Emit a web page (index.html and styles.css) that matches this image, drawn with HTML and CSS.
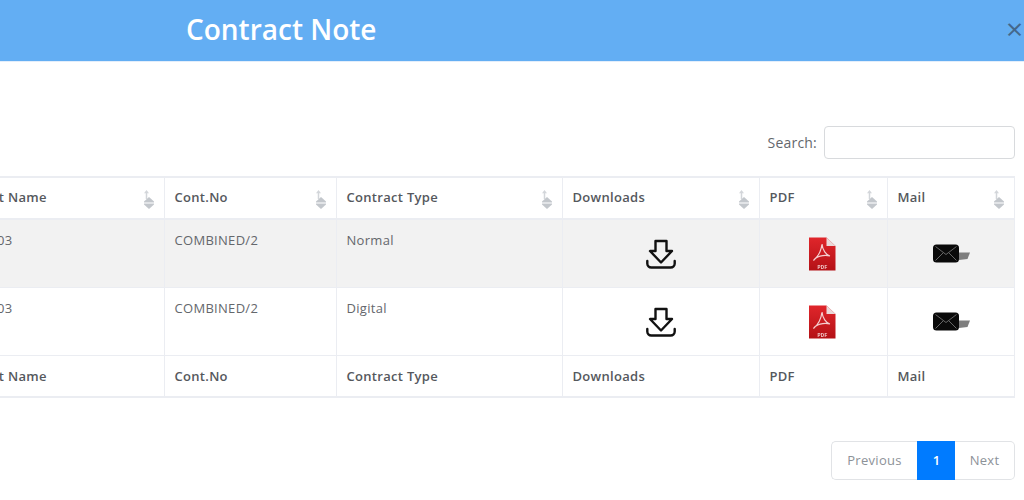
FILE: index.html
```html
<!DOCTYPE html>
<html lang="en">
<head>
<meta charset="utf-8">
<title>Contract Note</title>
<link rel="stylesheet" href="styles.css">
</head>
<body>
<svg class="defs" width="0" height="0" aria-hidden="true">
  <defs>
    <linearGradient id="pdfred" x1="0" y1="0" x2="0" y2="1">
      <stop offset="0" stop-color="#e0262b"/>
      <stop offset="1" stop-color="#b41116"/>
    </linearGradient>
    <symbol id="dl" viewBox="0 0 30 30">
      <path d="M9.500 2h11v10h5.500L15 23.500 4 12h5.500z" fill="none" stroke="#111" stroke-width="2.400" stroke-linejoin="round"/>
      <path d="M1.300 22v2.500a4 4 0 0 0 4 4h19.400a4 4 0 0 0 4-4V22" fill="none" stroke="#111" stroke-width="2.400" stroke-linecap="round"/>
    </symbol>
    <symbol id="pdf" viewBox="0 0 28 34">
      <path d="M1 0.500h17.500l9 8.500v24.500H1z" fill="url(#pdfred)"/>
      <path d="M18.500 0.500l9 8.500h-9z" fill="#ead9d9"/>
      <path d="M14 7c-.6 5-3.200 12-8.500 16.500 2-3.500 10-6.500 16.500-4.500-4-1-7.500-6-8-12z" fill="none" stroke="#f5cfd0" stroke-width="1.200"/>
      <text class="pdf-label" x="14.500" y="31.500" text-anchor="middle">PDF</text>
    </symbol>
    <symbol id="mail" viewBox="0 0 37 19">
      <rect x="0" y="0.500" width="26" height="18" rx="3.500" fill="#0a0a0a"/>
      <path d="M2.500 2.500l10.500 8 10.500-8M2.500 16.500l7.500-7.500M23.500 16.500l-7.500-7.500" fill="none" stroke="#666" stroke-width="1"/>
      <path d="M26 8.500h11l-2.500 6.500-8.500 1z" fill="#7e7e7e"/>
    </symbol>
  </defs>
</svg>
<header class="modal-head">
  <h1 class="modal-title">Contract Note</h1>
  <button class="close" type="button" aria-label="Close">×</button>
</header>
<main class="modal-body">
  <div class="search">
    <label class="search-label" for="q">Search:</label>
    <input class="search-input" id="q" type="search">
  </div>
  <table class="grid">
    <thead>
      <tr>
        <th class="c1 sort">Contract Name</th>
        <th class="c2 sort">Cont.No</th>
        <th class="c3 sort">Contract Type</th>
        <th class="c4 sort">Downloads</th>
        <th class="c5 sort">PDF</th>
        <th class="c6 sort">Mail</th>
      </tr>
    </thead>
    <tbody>
      <tr class="odd">
        <td>CON/2003</td>
        <td>COMBINED/2</td>
        <td>Normal</td>
        <td class="ic"><svg class="i-dl"><use href="#dl"/></svg></td>
        <td class="ic"><svg class="i-pdf"><use href="#pdf"/></svg></td>
        <td class="ic"><svg class="i-mail"><use href="#mail"/></svg></td>
      </tr>
      <tr>
        <td>CON/2003</td>
        <td>COMBINED/2</td>
        <td>Digital</td>
        <td class="ic"><svg class="i-dl"><use href="#dl"/></svg></td>
        <td class="ic"><svg class="i-pdf"><use href="#pdf"/></svg></td>
        <td class="ic"><svg class="i-mail"><use href="#mail"/></svg></td>
      </tr>
    </tbody>
    <tfoot>
      <tr>
        <th>Contract Name</th>
        <th>Cont.No</th>
        <th>Contract Type</th>
        <th>Downloads</th>
        <th>PDF</th>
        <th>Mail</th>
      </tr>
    </tfoot>
  </table>
  <nav class="pager">
    <a class="page first">Previous</a>
    <a class="page active">1</a>
    <a class="page last">Next</a>
  </nav>
</main>
</body>
</html>
```
FILE: styles.css
```css
* { box-sizing: border-box; }
html, body { margin: 0; height: 500px; overflow: hidden; background: #fff; }
body { font-family: "Open Sans", sans-serif; font-size: 13px; letter-spacing: 0.3px; color: #64676c; width: 1024px; }
.defs { position: absolute; }

.modal-head {
  height: 62px;
  background: #63aef3;
  display: flex;
  align-items: center;
  justify-content: space-between;
  padding: 0 0 4px 186px;
  border-bottom: 1px solid #e3eefb;
}
.modal-title { margin: 0; color: #fff; font-size: 28px; font-weight: 600; line-height: 1; letter-spacing: 0; }
.close {
  border: 0; background: none; padding: 0; width: 24px;
  color: #44678a; font: 400 30px/1 "Open Sans", sans-serif;
  text-align: left; margin: 0 -6px 0 0;
}

.modal-body { padding: 64px 9px 0 0; display: flex; flex-direction: column; align-items: flex-end; }
.search { display: flex; align-items: center; gap: 7px; height: 33px; margin-bottom: 17px; }
.search-label { font-size: 14px; letter-spacing: 0.2px; }
.search-input {
  width: 191px; height: 33px;
  border: 1px solid #d8dadd; border-radius: 4px; background: #fff;
}

.grid {
  width: 1077px;
  flex: none;
  table-layout: fixed;
  border-collapse: separate;
  border-spacing: 0;
  border-top: 2px solid #ebedf2;
  border-bottom: 2px solid #ebedf2;
  border-right: 1px solid #ebedf2;
}
.c1 { width: 227px; }
.c2 { width: 172px; }
.c3 { width: 226px; }
.c4 { width: 197px; }
.c5 { width: 128px; }
.c6 { width: 127px; }

th, td { text-align: left; vertical-align: top; border-left: 1px solid #ebedf2; }
th { height: 40px; padding: 0 10px 1px 9.500px; vertical-align: middle; font-weight: 600; color: #55585d; font-size: 13px; }
thead th { height: 42px; padding-bottom: 2px; border-bottom: 2px solid #ebedf2; position: relative; }
td { height: 68px; padding: 11px 10px 11px 9.500px; border-bottom: 1px solid #ebedf2; font-weight: 400; }
.odd td { background: #f2f2f2; }
.ic { text-align: center; vertical-align: middle; padding: 0; }
.ic svg { display: block; margin: 0 auto; filter: blur(0.35px); }
.i-dl { width: 30px; height: 30px; }
.i-pdf { width: 28px; height: 34px; transform: translateX(-2px); }
.i-mail { width: 37px; height: 19px; }
.pdf-label { font: 700 4.500px "Liberation Sans", sans-serif; fill: #f6d9d9; }

.sort::before, .sort::after {
  content: "";
  position: absolute;
}
.sort::before {
  top: 12px; right: 15px;
  width: 5px; height: 9px;
  background: #d3d6da;
  clip-path: polygon(50% 0, 100% 35%, 65% 35%, 65% 100%, 35% 100%, 35% 35%, 0 35%);
}
.sort::after {
  top: 19px; right: 10px;
  width: 10px; height: 12px;
  background: linear-gradient(#c3c7cc 44%, #e2e4e7 44% 56%, #c3c7cc 56%);
  clip-path: polygon(50% 0, 100% 38%, 100% 62%, 50% 100%, 0 62%, 0 38%);
}

.pager { display: flex; margin-top: 43px; height: 39px; }
.page { display: flex; align-items: center; justify-content: center; padding-bottom: 2px; font-size: 13px; color: #8d9298; border: 1px solid #e1e3e6; border-right: 0; }
.first { width: 86px; border-radius: 5px 0 0 5px; }
.active { width: 38px; background: #007bff; color: #fff; border-color: #007bff; font-weight: 600; }
.last { width: 60px; border-left: 0; border-right: 1px solid #e1e3e6; border-radius: 0 5px 5px 0; }
```
